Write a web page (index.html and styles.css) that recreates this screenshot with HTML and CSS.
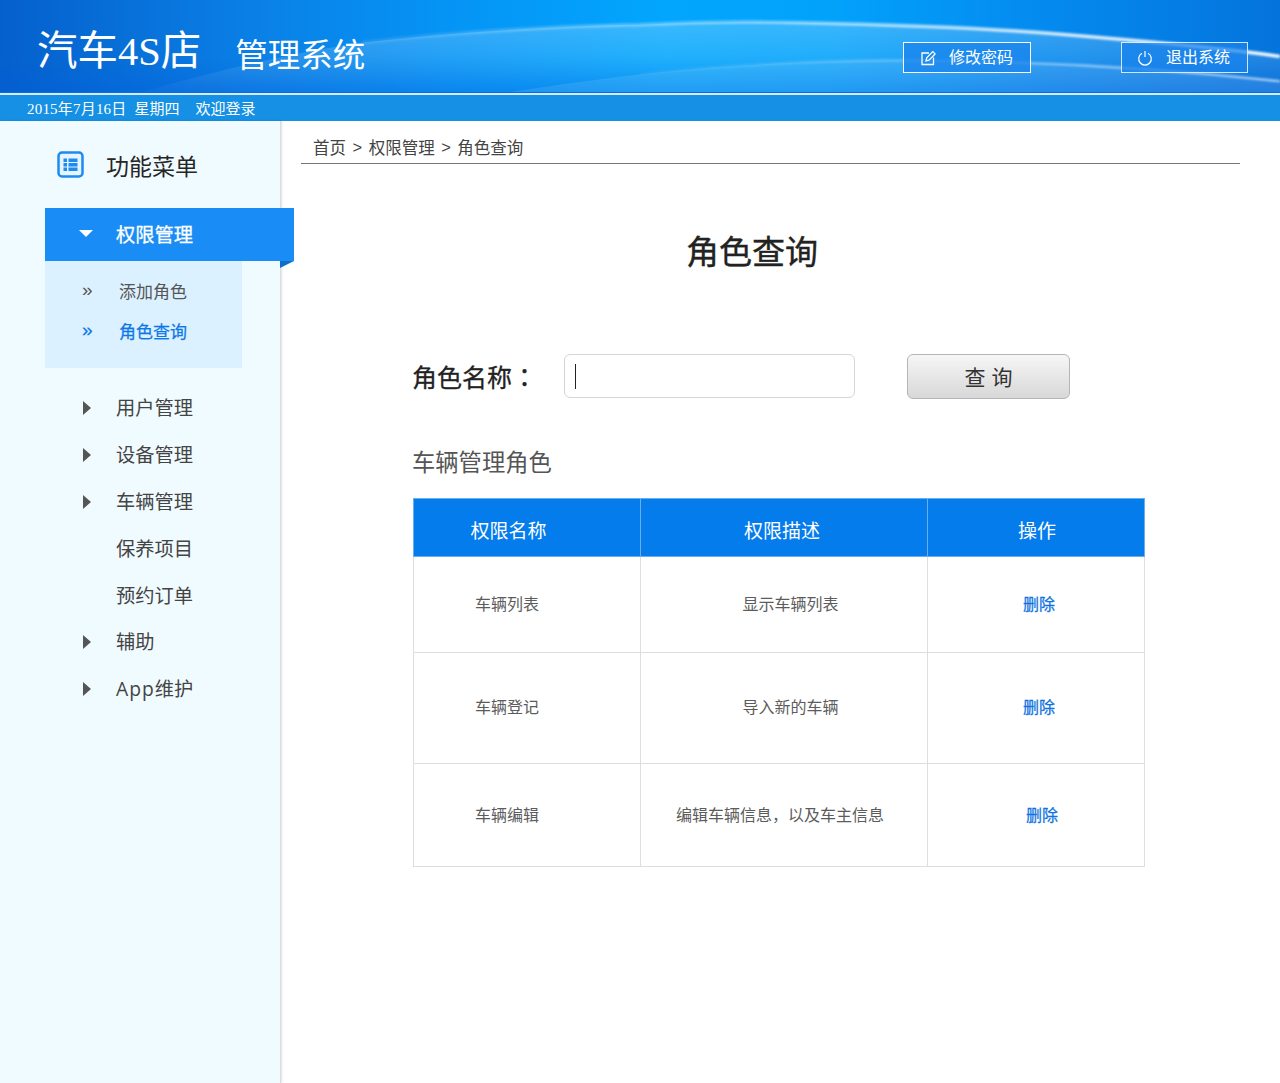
FILE: index.html
```html
<!DOCTYPE html>
<html lang="zh-CN">
<head>
<meta charset="utf-8">
<title>汽车4S店管理系统</title>
<link rel="stylesheet" href="styles.css">
</head>
<body>
<header class="banner">
  <svg class="waves" viewBox="0 0 1280 93" preserveAspectRatio="none" aria-hidden="true">
    <defs>
      <linearGradient id="w1" x1="0" x2="0" y1="0" y2="1">
        <stop offset=".1" stop-color="#fff" stop-opacity=".2"/>
        <stop offset="1" stop-color="#fff" stop-opacity=".02"/>
      </linearGradient>
      <linearGradient id="w2" x1="0" x2="1" y1="0" y2="0">
        <stop offset="0" stop-color="#fff" stop-opacity=".1"/>
        <stop offset=".4" stop-color="#fff" stop-opacity=".4"/>
        <stop offset=".7" stop-color="#fff" stop-opacity=".75"/>
        <stop offset="1" stop-color="#fff" stop-opacity=".95"/>
      </linearGradient>
      <linearGradient id="w3" x1="0" x2="1" y1="0" y2="0">
        <stop offset="0" stop-color="#fff" stop-opacity=".05"/>
        <stop offset=".5" stop-color="#fff" stop-opacity=".3"/>
        <stop offset="1" stop-color="#fff" stop-opacity=".6"/>
      </linearGradient>
      <filter id="soft" x="-5%" y="-50%" width="110%" height="200%"><feGaussianBlur stdDeviation="1.300"/></filter>
    </defs>
    <path d="M143 93C220 70 300 52 363 43C450 33 560 26 640 25C700 22 760 22 800 23C900 25 1020 30 1100 38C1170 44 1230 50 1280 57V93Z" fill="url(#w1)"/>
    <path d="M510 93C560 85 600 80 640 75C720 66 820 61 900 61C1040 61 1170 70 1280 82V93Z" fill="#fff" fill-opacity=".1"/>
    <path d="M363 43C450 33 560 26 640 25C700 22 760 22 800 23C900 25 1020 30 1100 38C1170 44 1230 50 1280 57" fill="none" stroke="url(#w2)" stroke-width="3.500" filter="url(#soft)"/>
    <path d="M640 75C720 66 820 61 900 61C1040 61 1170 70 1280 82" fill="none" stroke="url(#w3)" stroke-width="2.500" filter="url(#soft)"/>
  </svg>
  <div class="brand">
    <span class="brand-main">汽车4S店</span>
    <span class="brand-sub">管理系统</span>
  </div>
  <div class="header-actions">
    <a class="hbtn">
      <svg class="hicon" viewBox="0 0 16 16"><path d="M9 3H2v11.500h11.500V7.500" fill="none" stroke="#fff" stroke-width="1.300"/><path d="M6 10.800l.7-3L12.800 1.600l2.300 2.300-6.100 6.200z" fill="none" stroke="#fff" stroke-width="1.300"/></svg>
      <span>修改密码</span>
    </a>
    <a class="hbtn">
      <svg class="hicon" viewBox="0 0 16 16"><path d="M5 3.200a6.300 6.300 0 1 0 6 0" fill="none" stroke="#fff" stroke-width="1.200"/><path d="M8 1v6" stroke="#fff" stroke-width="1.200"/></svg>
      <span>退出系统</span>
    </a>
  </div>
</header>
<div class="datebar"><span class="date">2015年7月16日</span><span class="date">星期四</span><span class="date welcome">欢迎登录</span></div>
<div class="layout">
  <aside class="sidebar">
    <div class="menu-title">
      <svg class="menu-icon" viewBox="0 0 27 27"><rect x="1.500" y="1.500" width="24" height="24" rx="3.500" fill="#e6f5ff" stroke="#1c8cf0" stroke-width="2.500"/><path d="M6.500 7.500h3.500v3.500H6.500zM11.500 7.500H20.500v3.500h-9zM6.500 12h3.500v3.500H6.500zM11.500 12H20.500v3.500h-9zM6.500 16.500h3.500V20H6.500zM11.500 16.500H20.500V20h-9z" fill="#1c8cf0"/></svg>
      <span>功能菜单</span>
    </div>
    <div class="menu-active">
      <i class="tri-down"></i><span>权限管理</span>
      <i class="fold"></i>
    </div>
    <ul class="submenu">
      <li><span class="chev">»</span><span>添加角色</span></li>
      <li class="current"><span class="chev">»</span><span>角色查询</span></li>
    </ul>
    <ul class="menu">
      <li><i class="tri-right"></i>用户管理</li>
      <li><i class="tri-right"></i>设备管理</li>
      <li><i class="tri-right"></i>车辆管理</li>
      <li>保养项目</li>
      <li>预约订单</li>
      <li><i class="tri-right"></i>辅助</li>
      <li><i class="tri-right"></i><span class="latin">App</span>维护</li>
    </ul>
  </aside>
  <main class="content">
    <nav class="crumbs"><span>首页</span><span>&gt;</span><span>权限管理</span><span>&gt;</span><span>角色查询</span></nav>
    <h1 class="page-title">角色查询</h1>
    <div class="search">
      <label class="search-label">角色名称<span class="punct" lang="ko">：</span></label>
      <div class="search-input"><i class="caret"></i></div>
      <button class="search-btn">查 询</button>
    </div>
    <h2 class="section">车辆管理角色</h2>
    <table class="grid">
      <colgroup><col class="c1"><col class="c2"><col class="c3"></colgroup>
      <thead>
        <tr><th class="h1">权限名称</th><th class="h2">权限描述</th><th class="h3">操作</th></tr>
      </thead>
      <tbody>
        <tr class="r1"><td class="d1">车辆列表</td><td class="d2">显示车辆列表</td><td class="d3"><a>删除</a></td></tr>
        <tr class="r2"><td class="d1">车辆登记</td><td class="d2">导入新的车辆</td><td class="d3"><a>删除</a></td></tr>
        <tr class="r3"><td class="d1">车辆编辑</td><td class="d2b">编辑车辆信息<span class="punct" lang="ko">，</span>以及车主信息</td><td class="d3b"><a>删除</a></td></tr>
      </tbody>
    </table>
  </main>
</div>
</body>
</html>
```
FILE: styles.css
```css
* { box-sizing: border-box; }
html, body { margin: 0; height: 100%; }
body {
  width: 1280px; height: 1083px; overflow: hidden; background: #fff; color: #444;
  font-family: "Liberation Sans", "Noto Sans CJK SC", sans-serif;
}
ul { list-style: none; margin: 0; padding: 0; }
h1, h2 { margin: 0; font-weight: 400; }
.punct { font-family: "Noto Sans CJK KR", sans-serif; }

.banner {
  position: relative; height: 93px; display: flex; justify-content: space-between; overflow: hidden;
  border-bottom: 1px solid #0a6edd;
  background: linear-gradient(90deg, #0560cc 0, #0a80e6 20%, #0594f5 35%, #02a6fd 52%, #02a2fb 65%, #048cf0 80%, #0474dc 100%);
}
.banner::after {
  content: ""; position: absolute; left: 0; right: 0; bottom: 0; height: 36px;
  background: linear-gradient(180deg, rgba(0,90,220,0), rgba(0,90,220,.3));
}
.waves { position: absolute; inset: 0; width: 100%; height: 100%; z-index: 1; }
.brand { position: relative; z-index: 2; padding: 27px 0 0 37px; display: flex; color: #fff; align-items: flex-start; font-family: "Liberation Serif", "Noto Sans CJK SC", serif; }
.brand-main { font-size: 40.500px; line-height: 50px; }
.brand-sub { font-size: 32.500px; line-height: 44px; margin: 7px 0 0 34px; }
.header-actions { position: relative; z-index: 2; display: flex; gap: 90px; padding: 42px 32px 0 0; align-items: flex-start; }
.hbtn {
  width: 128px; height: 31px; display: flex; align-items: center; gap: 13px; padding: 0 0 3px 16px;
  border: 1px solid #fff; color: #fff; font-size: 16px; background: rgba(25,130,235,.72);
}
.hbtn + .hbtn { width: 127px; padding-left: 15px; border-color: rgba(255,255,255,.8); }
.hicon { width: 16px; height: 16px; flex: none; margin-top: 3px; }

.datebar {
  height: 28px; border-top: 2px solid #d6ecfb; background: #1590e4; color: #fff; display: flex;
  padding: 0 0 2px 27px; align-items: center; font-size: 15px; gap: 8px;
  font-family: "Liberation Serif", "Noto Sans CJK SC", serif;
}
.date:first-child { letter-spacing: .2px; }
.welcome { margin-left: 8px; }

.layout { display: flex; height: 962px; }
.sidebar {
  width: 281px; flex: none; background: #f0fbff; border-right: 1px solid #d8dde0;
  box-shadow: 1px 0 2px rgba(0,0,0,.12); padding: 0 0 0 45px; position: relative; z-index: 1;
}
.menu-title { height: 87px; display: flex; align-items: center; padding-left: 12px; gap: 22px; font-size: 23px; color: #262626; }
.menu-icon { width: 27px; height: 27px; flex: none; }
.menu-active {
  position: relative; width: 249px; height: 53px; background: #1a8cf5; color: #fff; font-size: 19.250px;
  display: flex; align-items: center; padding: 0 0 2px 34px; gap: 23px; -webkit-text-stroke: .3px #fff;
}
.tri-down { width: 0; height: 0; border: 7px solid transparent; border-top: 7px solid #fff; border-bottom: 0; flex: none; }
.fold { position: absolute; right: 0; bottom: -7px; width: 0; height: 0; border-top: 7px solid #0f6fc8; border-right: 14px solid transparent; }
.submenu { width: 197px; height: 107px; background: #dcf1ff; padding-top: 9px; }
.submenu li { height: 40px; display: flex; align-items: center; font-size: 17px; color: #555; padding-left: 37px; }
.submenu .chev { width: 37px; font-size: 19px; }
.submenu .current { color: #0c78e6; -webkit-text-stroke: .25px #0c78e6; }
.menu { padding-top: 16px; }
.menu li { height: 46.800px; display: flex; align-items: center; padding-left: 71px; font-size: 19.250px; color: #444; position: relative; font-family: "Open Sans", "Noto Sans CJK SC", sans-serif; }
.latin { letter-spacing: 1px; }
.tri-right { position: absolute; left: 38px; top: 17px; width: 0; height: 0; border: 7px solid transparent; border-left: 8px solid #555; border-right: 0; }

.content { flex: 1; padding: 0 40px 0 20px; }
.crumbs { height: 43px; border-bottom: 1px solid #777; display: flex; gap: 6.500px; align-items: center; padding: 10px 0 0 12px; font-size: 16.500px; color: #444; }
.page-title { margin-top: 65px; height: 48px; line-height: 48px; text-align: center; font-size: 33px; color: #222; padding-right: 37px; -webkit-text-stroke: .4px #222; }
.search { margin: 76px 0 0 111px; height: 46px; display: flex; align-items: center; }
.search-label { width: 152px; font-size: 25px; color: #222; white-space: nowrap; -webkit-text-stroke: .3px #222; }
.search-input { width: 291px; height: 44px; border: 1px solid #d5d5d5; border-radius: 6px; background: #fff; padding: 9px 10px; }
.caret { display: block; width: 1px; height: 25px; background: #222; }
.search-btn {
  margin-left: 52px; width: 163px; height: 45px; border: 1px solid #b5b5b5; border-radius: 6px;
  background: linear-gradient(180deg, #f6f6f6, #d8d8d8); font: inherit; font-size: 21px; color: #333;
}
.section { margin: 46px 0 0 111px; height: 36px; line-height: 36px; font-size: 23.300px; color: #555; }
.grid { margin: 17px 0 0 112px; width: 731px; border-collapse: collapse; table-layout: fixed; }
.c1 { width: 227px; } .c2 { width: 287px; } .c3 { width: 217px; }
.grid th, .grid td { padding: 0; vertical-align: middle; text-align: center; }
.grid thead tr { height: 58px; }
.grid th { background: #047cec; color: #fff; font-size: 19px; font-weight: 400; border: 1px solid #6aaeee; padding-top: 3px; }
.grid td { border: 1px solid #dedede; font-size: 16px; color: #5c5c5c; padding-bottom: 4px; }
.grid .r3 td { padding-bottom: 2px; }
.grid .h1 { padding-right: 37px; }
.grid .h2 { padding-right: 4px; }
.grid .h3 { padding-left: 2px; }
.r1 { height: 96px; } .r2 { height: 111px; } .r3 { height: 103px; }
.grid .d1 { padding-right: 40px; }
.grid .d2 { padding-left: 13px; }
.grid .d2b { padding-right: 8px; }
.grid .d3 { padding-left: 6px; } .grid .d3b { padding-left: 12px; }
.grid a { color: #0c72e0; -webkit-text-stroke: .25px #0c72e0; }
```
